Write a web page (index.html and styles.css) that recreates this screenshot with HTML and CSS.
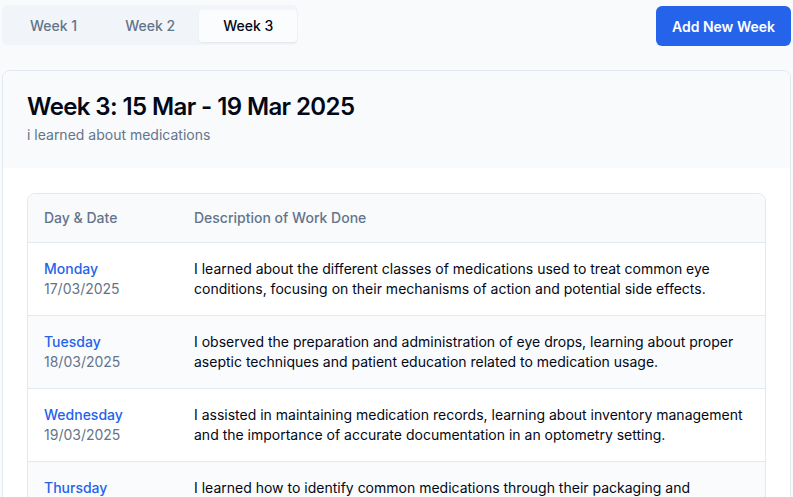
FILE: index.html
```html
<!DOCTYPE html>
<html lang="en">
<head>
<meta charset="utf-8">
<title>Weekly Log</title>
<link rel="stylesheet" href="styles.css">
</head>
<body>
<div class="page">
  <div class="topbar">
    <div class="tabs">
      <button class="tab">Week 1</button>
      <button class="tab">Week 2</button>
      <button class="tab active">Week 3</button>
    </div>
    <button class="add-btn">Add New Week</button>
  </div>
  <div class="card">
    <div class="card-header">
      <h1 class="title">Week 3: 15 Mar - 19 Mar 2025</h1>
      <p class="subtitle">i learned about medications</p>
    </div>
    <div class="card-body">
      <div class="table-wrap">
        <table class="log">
          <colgroup><col class="col-day"><col></colgroup>
          <thead>
            <tr><th>Day &amp; Date</th><th>Description of Work Done</th></tr>
          </thead>
          <tbody>
            <tr>
              <td><div class="day">Monday</div><div class="date">17/03/2025</div></td>
              <td>I learned about the different classes of medications used to treat common eye conditions, focusing on their mechanisms of action and potential side effects.</td>
            </tr>
            <tr class="alt">
              <td><div class="day">Tuesday</div><div class="date">18/03/2025</div></td>
              <td>I observed the preparation and administration of eye drops, learning about proper aseptic techniques and patient education related to medication usage.</td>
            </tr>
            <tr>
              <td><div class="day">Wednesday</div><div class="date">19/03/2025</div></td>
              <td>I assisted in maintaining medication records, learning about inventory management and the importance of accurate documentation in an optometry setting.</td>
            </tr>
            <tr class="alt">
              <td><div class="day">Thursday</div><div class="date">20/03/2025</div></td>
              <td>I learned how to identify common medications through their packaging and labeling, and practiced explaining dosage instructions to patients.</td>
            </tr>
          </tbody>
        </table>
      </div>
    </div>
  </div>
</div>
</body>
</html>
```
FILE: styles.css
```css
* { box-sizing: border-box; }
html, body { margin: 0; padding: 0; }
body {
  background: #f8fafc;
  font-family: Inter, "Noto Sans", "Liberation Sans", sans-serif;
  color: #020817;
}
.page {
  padding: 5px 2px 0 2px;
}
.topbar {
  display: flex;
  justify-content: space-between;
  align-items: flex-start;
  margin-bottom: 24px;
}
.tabs {
  display: flex;
  background: #f1f5f9;
  border-radius: 6px;
  padding: 5px 1px 3px 4px;
  height: 40px;
}
.tab {
  font: inherit;
  font-size: 14px;
  font-weight: 500;
  line-height: 20px;
  color: #64748b;
  background: transparent;
  border: 0;
  border-radius: 4px;
  padding: 6px 24px;
  height: 32px;
  cursor: pointer;
}
.tab.active {
  background: #fbfcfd;
  color: #020817;
  box-shadow: 0 1px 2px rgba(0,0,0,0.06);
}
.add-btn {
  font: inherit;
  font-size: 14px;
  font-weight: 600;
  color: #ffffff;
  background: #2563eb;
  border: 0;
  border-radius: 6px;
  height: 40px;
  padding: 0 16px;
  margin-top: 1px;
}
.card {
  background: #ffffff;
  border: 1px solid #e2e8f0;
  border-radius: 8px;
  overflow: hidden;
}
.card-header {
  background: #f8fafc;
  padding: 24px 24px 23px;
}
.title {
  margin: 0;
  font-size: 24px;
  line-height: 24px;
  font-weight: 600;
  letter-spacing: -0.025em;
  color: #020817;
}
.subtitle {
  margin: 6px 0 0;
  font-size: 14px;
  line-height: 20px;
  color: #64748b;
}
.card-body {
  padding: 25px 24px 24px;
}
.table-wrap {
  border: 1px solid #e2e8f0;
  border-radius: 8px;
  overflow: hidden;
}
.log {
  width: 100%;
  table-layout: fixed;
  border-collapse: collapse;
  font-size: 14px;
  line-height: 20px;
}
.log col.col-day { width: 150px; }
.log th {
  text-align: left;
  font-weight: 500;
  color: #64748b;
  background: #f8fafc;
  padding: 14px 16px;
  border-bottom: 1px solid #e2e8f0;
}
.log td {
  padding: 16px 16px;
  vertical-align: top;
  color: #020817;
  border-bottom: 1px solid #e2e8f0;
}
.log tr.alt td { background: #f9fbfd; }
.day { color: #2563eb; font-weight: 500; }
.date { color: #64748b; }
```
